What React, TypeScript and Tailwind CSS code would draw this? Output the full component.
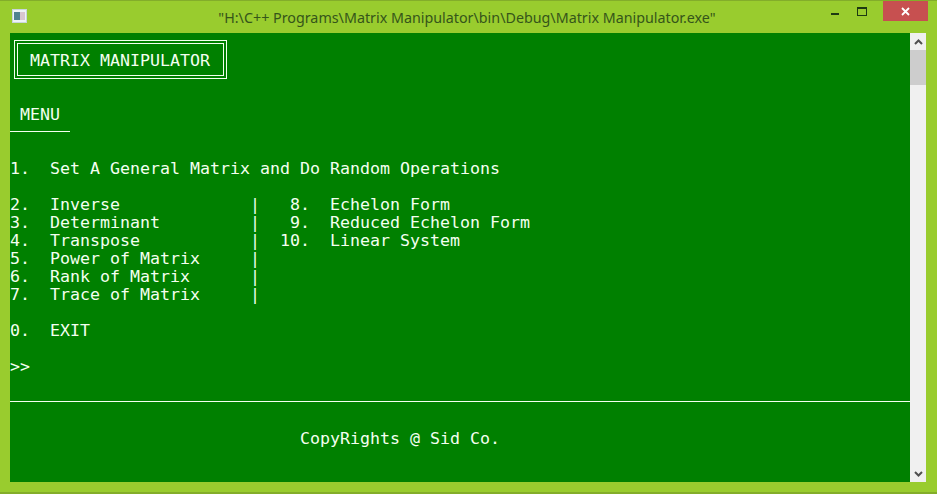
import React from "react";

const mono = "font-['DejaVu_Sans_Mono',monospace] text-[16.61px] leading-[20px] text-[#f4fff0] whitespace-pre";

const rows = [
  { n: "2.", label: "Inverse", right: " 8.  Echelon Form" },
  { n: "3.", label: "Determinant", right: " 9.  Reduced Echelon Form" },
  { n: "4.", label: "Transpose", right: "10.  Linear System" },
  { n: "5.", label: "Power of Matrix", right: "" },
  { n: "6.", label: "Rank of Matrix", right: "" },
  { n: "7.", label: "Trace of Matrix", right: "" },
];

const TitleBar = () => (
  <div className="flex h-[32px] items-start bg-[#99cc2e]">
    <svg width="15" height="14" viewBox="0 0 15 14" className="ml-[12px] mt-[8px]">
      <rect x="0.5" y="0.5" width="14" height="13" fill="#eef3f6" stroke="#c9d6dc" />
      <rect x="2" y="3" width="6" height="8" fill="#4f8290" />
      <rect x="8" y="3" width="5" height="8" fill="#d8c6cf" />
    </svg>
    <div className="flex-1 pt-[8px] pl-[76px] text-center font-['Noto_Sans',sans-serif] text-[14.3px] leading-[18px] text-[#35551a]">
      "H:\C++ Programs\Matrix Manipulator\bin\Debug\Matrix Manipulator.exe"
    </div>
    <div className="mr-[9px] flex items-start">
      <div className="mt-[12px] mr-[18px] h-[2px] w-[8px] bg-[#1d3a12]" />
      <div className="mt-[6px] mr-[8px] h-[9px] w-[10px] border border-t-2 border-[#1d3a12]" />
      <div className="ml-[8px] flex h-[20px] w-[45px] items-center justify-center bg-[#c75050]">
        <svg width="9" height="9" viewBox="0 0 9 9">
          <path d="M1 1 L8 8 M8 1 L1 8" stroke="#ffffff" strokeWidth="1.8" />
        </svg>
      </div>
    </div>
  </div>
);

const ScrollBar = () => (
  <div className="flex w-[16px] flex-col bg-[#f0f0f0]">
    <div className="flex h-[17px] items-center justify-center">
      <svg width="9" height="6" viewBox="0 0 9 6">
        <path d="M1 5 L4.5 1.5 L8 5" fill="none" stroke="#505050" strokeWidth="2" />
      </svg>
    </div>
    <div className="h-[35px] bg-[#cdcdcd]" />
    <div className="flex-1" />
    <div className="flex h-[17px] items-center justify-center">
      <svg width="9" height="6" viewBox="0 0 9 6">
        <path d="M1 1 L4.5 4.5 L8 1" fill="none" stroke="#505050" strokeWidth="2" />
      </svg>
    </div>
  </div>
);

export default function App() {
  return (
    <div className="flex h-[494px] w-[937px] flex-col overflow-hidden border-t border-[#83ad2a] bg-[#99cc2e]">
      <TitleBar />
      <div className="flex h-[449px] pl-[10px] pr-[11px]">
        <div className={`flex-1 bg-[#008000] ${mono}`}>
          <div className="ml-[4px] mt-[7px] box-border flex h-[39px] w-[213px] items-center border-[4px] border-double border-[#f4fff0] pl-[12px] pt-[2px]">
            MATRIX MANIPULATOR
          </div>
          <div className="mt-[26px] h-[18px] pl-[10px]">MENU</div>
          <div className="mt-[8px] h-px w-[60px] bg-[#f4fff0]" />
          <div className="mt-[27px] h-[18px]">1.  Set A General Matrix and Do Random Operations</div>
          <div className="mt-[18px]">
            {rows.map((row) => (
              <div key={row.n} className="flex h-[18px]">
                <span className="w-[40px]">{row.n}</span>
                <span className="w-[200px]">{row.label}</span>
                <span className="w-[30px]">|</span>
                {row.right && <span>{row.right}</span>}
              </div>
            ))}
          </div>
          <div className="mt-[18px] h-[18px]">0.  EXIT</div>
          <div className="mt-[18px] h-[18px]">&gt;&gt;</div>
          <div className="mt-[26px] h-px w-full bg-[#f4fff0]" />
          <div className="mt-[27px] h-[18px] pl-[290px]">CopyRights @ Sid Co.</div>
        </div>
        <ScrollBar />
      </div>
      <div className="flex-1 border-b-2 border-[#83ad2a]" />
    </div>
  );
}
